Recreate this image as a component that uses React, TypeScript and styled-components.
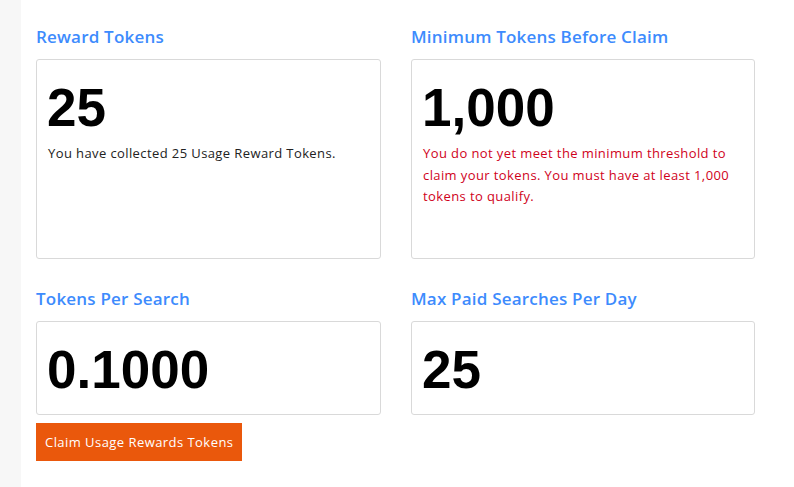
import styled, { createGlobalStyle } from 'styled-components';

const GlobalStyle = createGlobalStyle`
  html, body {
    margin: 0;
    padding: 0;
    background: #ffffff;
  }
  body {
    font-family: 'Open Sans', Lato, sans-serif;
  }
`;

type Stat = {
  title: string;
  value: string;
  note?: string;
  warn?: boolean;
};

const stats: Stat[] = [
  {
    title: 'Reward Tokens',
    value: '25',
    note: 'You have collected 25 Usage Reward Tokens.',
  },
  {
    title: 'Minimum Tokens Before Claim',
    value: '1,000',
    note: 'You do not yet meet the minimum threshold to claim your tokens. You must have at least 1,000 tokens to qualify.',
    warn: true,
  },
  { title: 'Tokens Per Search', value: '0.1000' },
  { title: 'Max Paid Searches Per Day', value: '25' },
];

export default function App() {
  return (
    <>
      <GlobalStyle />
      <Page>
        <SideRail />
        <Main>
          <StatGrid>
            {stats.map((s, i) => (
              <StatBlock key={s.title}>
                <StatTitle>{s.title}</StatTitle>
                <StatCard $tall={i < 2}>
                  <StatValue>{s.value}</StatValue>
                  {s.note && <StatNote $warn={s.warn}>{s.note}</StatNote>}
                </StatCard>
              </StatBlock>
            ))}
          </StatGrid>
          <ClaimButton type="button">Claim Usage Rewards Tokens</ClaimButton>
        </Main>
      </Page>
    </>
  );
}

const Page = styled.div`
  display: flex;
  min-height: 487px;
`;

const SideRail = styled.div`
  width: 21px;
  flex-shrink: 0;
  background: #f7f7f7;
`;

const Main = styled.main`
  flex: 1;
  padding: 27px 0 0 15px;
`;

const StatGrid = styled.div`
  display: grid;
  grid-template-columns: 345px 344px;
  column-gap: 30px;
  row-gap: 30px;
`;

const StatBlock = styled.section`
  display: flex;
  flex-direction: column;
`;

const StatTitle = styled.h3`
  margin: 0 0 12px;
  font-size: 17px;
  line-height: 20px;
  font-weight: 600;
  letter-spacing: 0.2px;
  color: #3d8bfd;
`;

const StatCard = styled.div<{ $tall?: boolean }>`
  box-sizing: border-box;
  min-height: ${(p) => (p.$tall ? '200px' : '94px')};
  padding: 22px 10px 18px;
  border: 1px solid #d9d9d9;
  border-radius: 3px;
  background: #fff;
`;

const StatValue = styled.div`
  font-family: 'Liberation Sans', Arial, sans-serif;
  font-size: 53px;
  line-height: 52px;
  font-weight: 700;
  color: #000;
`;

const StatNote = styled.p<{ $warn?: boolean }>`
  margin: 9px 0 0 1px;
  font-size: 13px;
  line-height: 21.5px;
  letter-spacing: 0.4px;
  color: ${(p) => (p.$warn ? '#d0021b' : '#222')};
`;

const ClaimButton = styled.button`
  display: block;
  margin-top: 8px;
  height: 38px;
  padding: 0 9px;
  border: none;
  border-radius: 0;
  background: #ea580c;
  color: #fff;
  font-family: 'Open Sans', Lato, sans-serif;
  font-size: 13px;
  letter-spacing: 0.45px;
  cursor: pointer;
`;
